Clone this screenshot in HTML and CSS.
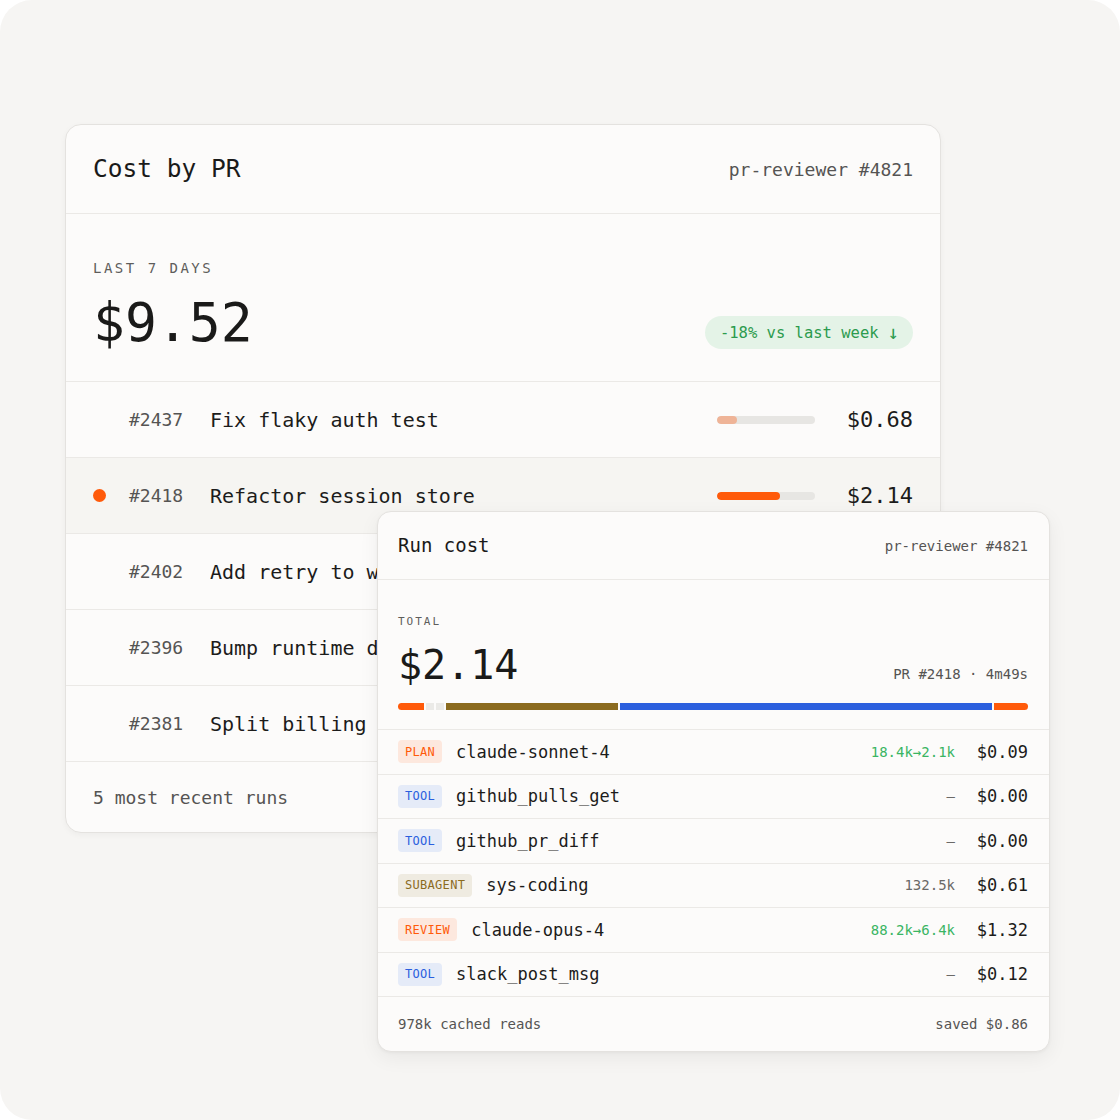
FILE: index.html
```html
<!DOCTYPE html>
<html lang="en">
<head>
<meta charset="utf-8">
<title>Cost by PR</title>
<link rel="stylesheet" href="styles.css">
</head>
<body>
<div class="frame">
  <section class="card pr-card">
    <header class="pr-head">
      <h1 class="pr-title">Cost by PR</h1>
      <span class="pr-agent">pr-reviewer #4821</span>
    </header>
    <div class="pr-summary">
      <div class="eyebrow">LAST 7 DAYS</div>
      <div class="summary-row">
        <div class="big-amount">$9.52</div>
        <span class="trend"><span>-18% vs last week</span><span class="trend-arrow">↓</span></span>
      </div>
    </div>
    <ul class="pr-list">
      <li class="pr-row">
        <span class="dot-cell"></span>
        <span class="pr-num">#2437</span>
        <span class="pr-name">Fix flaky auth test</span>
        <span class="bar"><span class="bar-fill" style="width: 20%"></span></span>
        <span class="pr-cost">$0.68</span>
      </li>
      <li class="pr-row is-active">
        <span class="dot-cell"><span class="dot"></span></span>
        <span class="pr-num">#2418</span>
        <span class="pr-name">Refactor session store</span>
        <span class="bar"><span class="bar-fill" style="width: 64%"></span></span>
        <span class="pr-cost">$2.14</span>
      </li>
      <li class="pr-row">
        <span class="dot-cell"></span>
        <span class="pr-num">#2402</span>
        <span class="pr-name">Add retry to webhook sender</span>
        <span class="bar"><span class="bar-fill" style="width: 91%"></span></span>
        <span class="pr-cost">$3.04</span>
      </li>
      <li class="pr-row">
        <span class="dot-cell"></span>
        <span class="pr-num">#2396</span>
        <span class="pr-name">Bump runtime deps</span>
        <span class="bar"><span class="bar-fill" style="width: 57%"></span></span>
        <span class="pr-cost">$1.91</span>
      </li>
      <li class="pr-row">
        <span class="dot-cell"></span>
        <span class="pr-num">#2381</span>
        <span class="pr-name">Split billing worker</span>
        <span class="bar"><span class="bar-fill" style="width: 52%"></span></span>
        <span class="pr-cost">$1.75</span>
      </li>
    </ul>
    <footer class="pr-foot">5 most recent runs</footer>
  </section>

  <section class="card run-card">
    <header class="run-head">
      <h2 class="run-title">Run cost</h2>
      <span class="run-agent">pr-reviewer #4821</span>
    </header>
    <div class="run-summary">
      <div class="eyebrow small">TOTAL</div>
      <div class="run-total-row">
        <div class="run-amount">$2.14</div>
        <span class="run-meta">PR #2418 · 4m49s</span>
      </div>
      <div class="stack">
        <span class="seg seg-orange" style="flex-grow: 26"></span>
        <span class="seg seg-gray" style="flex-grow: 8"></span>
        <span class="seg seg-gray" style="flex-grow: 8"></span>
        <span class="seg seg-olive" style="flex-grow: 172"></span>
        <span class="seg seg-blue" style="flex-grow: 373"></span>
        <span class="seg seg-orange" style="flex-grow: 34"></span>
      </div>
    </div>
    <ul class="step-list">
      <li class="step">
        <span class="tag tag-orange">PLAN</span>
        <span class="step-name">claude-sonnet-4</span>
        <span class="tokens green">18.4k→2.1k</span>
        <span class="step-cost">$0.09</span>
      </li>
      <li class="step">
        <span class="tag tag-blue">TOOL</span>
        <span class="step-name">github_pulls_get</span>
        <span class="tokens">–</span>
        <span class="step-cost">$0.00</span>
      </li>
      <li class="step">
        <span class="tag tag-blue">TOOL</span>
        <span class="step-name">github_pr_diff</span>
        <span class="tokens">–</span>
        <span class="step-cost">$0.00</span>
      </li>
      <li class="step">
        <span class="tag tag-olive">SUBAGENT</span>
        <span class="step-name">sys-coding</span>
        <span class="tokens">132.5k</span>
        <span class="step-cost">$0.61</span>
      </li>
      <li class="step">
        <span class="tag tag-orange">REVIEW</span>
        <span class="step-name">claude-opus-4</span>
        <span class="tokens green">88.2k→6.4k</span>
        <span class="step-cost">$1.32</span>
      </li>
      <li class="step">
        <span class="tag tag-blue">TOOL</span>
        <span class="step-name">slack_post_msg</span>
        <span class="tokens">–</span>
        <span class="step-cost">$0.12</span>
      </li>
    </ul>
    <footer class="run-foot">
      <span>978k cached reads</span>
      <span>saved $0.86</span>
    </footer>
  </section>
</div>
</body>
</html>
```

FILE: styles.css
```css
* {
  box-sizing: border-box;
}

html, body {
  margin: 0;
  padding: 0;
  background: #ffffff;
}

body {
  font-family: "DejaVu Sans Mono", "Liberation Mono", monospace;
  color: #1c1c1b;
}

h1, h2, ul {
  margin: 0;
  padding: 0;
  font-weight: normal;
}

ul {
  list-style: none;
}

.frame {
  position: relative;
  width: 1120px;
  height: 1120px;
  border-radius: 32px;
  background: #f6f5f3;
  padding: 124px 0 0 65px;
  overflow: hidden;
}

.card {
  background: #fcfbfa;
  border: 1px solid #e4e2df;
}

/* ---------- Cost by PR card ---------- */

.pr-card {
  width: 876px;
  border-radius: 16px;
  box-shadow: 0 2px 6px rgba(0, 0, 0, 0.04);
  overflow: hidden;
}

.pr-head {
  height: 88px;
  padding: 0 27px;
  display: flex;
  align-items: center;
  justify-content: space-between;
}

.pr-title {
  font-size: 24.5px;
  line-height: 1;
  color: #1a1a19;
}

.pr-agent {
  font-size: 18px;
  color: #555453;
}

.pr-summary {
  height: 168px;
  border-top: 1px solid #ebe9e6;
  padding: 47px 27px 0;
}

.eyebrow {
  font-size: 14px;
  line-height: 1;
  letter-spacing: 2.5px;
  color: #5e5d5b;
}

.summary-row {
  margin-top: 21px;
  display: flex;
  align-items: flex-end;
  justify-content: space-between;
}

.big-amount {
  font-size: 53px;
  line-height: 1;
  color: #1a1a19;
}

.trend {
  margin-bottom: 0;
  height: 33px;
  padding: 0 14px 0 15px;
  border-radius: 17px;
  background: #e4f3e7;
  color: #2c9b4e;
  font-size: 15.5px;
  display: flex;
  align-items: center;
  gap: 9px;
}

.trend-arrow {
  font-size: 19px;
  line-height: 1;
}

.pr-row {
  height: 76px;
  border-top: 1px solid #ebe9e6;
  padding: 0 27px;
  display: grid;
  grid-template-columns: 36px 81px 1fr 98px 98px;
  align-items: center;
}

.pr-row.is-active {
  background: #f6f5f2;
}

.dot-cell {
  display: flex;
  align-items: center;
}

.dot {
  width: 13px;
  height: 13px;
  border-radius: 50%;
  background: #ff5a0a;
}

.pr-num {
  font-size: 18px;
  color: #555453;
}

.pr-name {
  font-size: 20px;
  color: #1c1c1b;
  white-space: nowrap;
  overflow: hidden;
}

.bar {
  height: 8px;
  border-radius: 4px;
  background: #e7e6e3;
  overflow: hidden;
}

.bar-fill {
  display: block;
  height: 100%;
  border-radius: 4px;
  background: #efb497;
}

.is-active .bar-fill {
  background: #ff5a0a;
}

.pr-cost {
  font-size: 22px;
  text-align: right;
  color: #1c1c1b;
}

.pr-foot {
  height: 71px;
  border-top: 1px solid #ebe9e6;
  padding: 0 27px;
  display: flex;
  align-items: center;
  font-size: 18px;
  color: #555453;
}

/* ---------- Run cost card (floating over the list) ---------- */

.run-card {
  position: absolute;
  left: 377px;
  top: 511px;
  width: 673px;
  border-radius: 14px;
  box-shadow: 0 6px 20px rgba(0, 0, 0, 0.06), 0 1px 3px rgba(0, 0, 0, 0.04);
  overflow: hidden;
}

.run-head {
  height: 67px;
  padding: 0 21px 0 20px;
  display: flex;
  align-items: center;
  justify-content: space-between;
}

.run-title {
  font-size: 19px;
  line-height: 1;
  color: #1a1a19;
}

.run-agent {
  font-size: 14px;
  color: #555453;
}

.run-summary {
  height: 150px;
  border-top: 1px solid #ebe9e6;
  padding: 36px 21px 0 20px;
}

.eyebrow.small {
  font-size: 11px;
  letter-spacing: 2px;
}

.run-total-row {
  margin-top: 18px;
  display: flex;
  align-items: flex-end;
  justify-content: space-between;
}

.run-amount {
  font-size: 40px;
  line-height: 1;
  color: #1a1a19;
}

.run-meta {
  margin-bottom: 4px;
  font-size: 14px;
  line-height: 1;
  color: #555453;
}

.stack {
  margin-top: 18px;
  height: 7px;
  display: flex;
  gap: 2px;
}

.seg {
  flex-basis: 0;
  height: 100%;
}

.seg:first-child {
  border-radius: 4px 0 0 4px;
}

.seg:last-child {
  border-radius: 0 4px 4px 0;
}

.seg-orange { background: #ff5a0a; }
.seg-gray { background: #ebeae7; }
.seg-olive { background: #8b6b1f; }
.seg-blue { background: #2b5fde; }

.step {
  height: 44.5px;
  border-top: 1px solid #ebe9e6;
  padding: 0 21px 0 20px;
  display: flex;
  align-items: center;
}

.tag {
  height: 23px;
  padding: 0 7px;
  border-radius: 4px;
  font-size: 12px;
  letter-spacing: 0.3px;
  display: flex;
  align-items: center;
}

.tag-orange {
  background: #fde8de;
  color: #ff5a0a;
}

.tag-blue {
  background: #e5ebf8;
  color: #2b5fde;
}

.tag-olive {
  background: #efebe1;
  color: #8b6b1f;
}

.step-name {
  flex: 1;
  margin-left: 14px;
  font-size: 17px;
  color: #1c1c1b;
}

.tokens {
  font-size: 14px;
  color: #6a6967;
}

.tokens.green {
  color: #3ab563;
}

.step-cost {
  width: 73px;
  text-align: right;
  font-size: 17px;
  color: #1c1c1b;
}

.run-foot {
  height: 55px;
  border-top: 1px solid #ebe9e6;
  padding: 0 21px 0 20px;
  display: flex;
  align-items: center;
  justify-content: space-between;
  font-size: 14px;
  color: #555453;
}
```
